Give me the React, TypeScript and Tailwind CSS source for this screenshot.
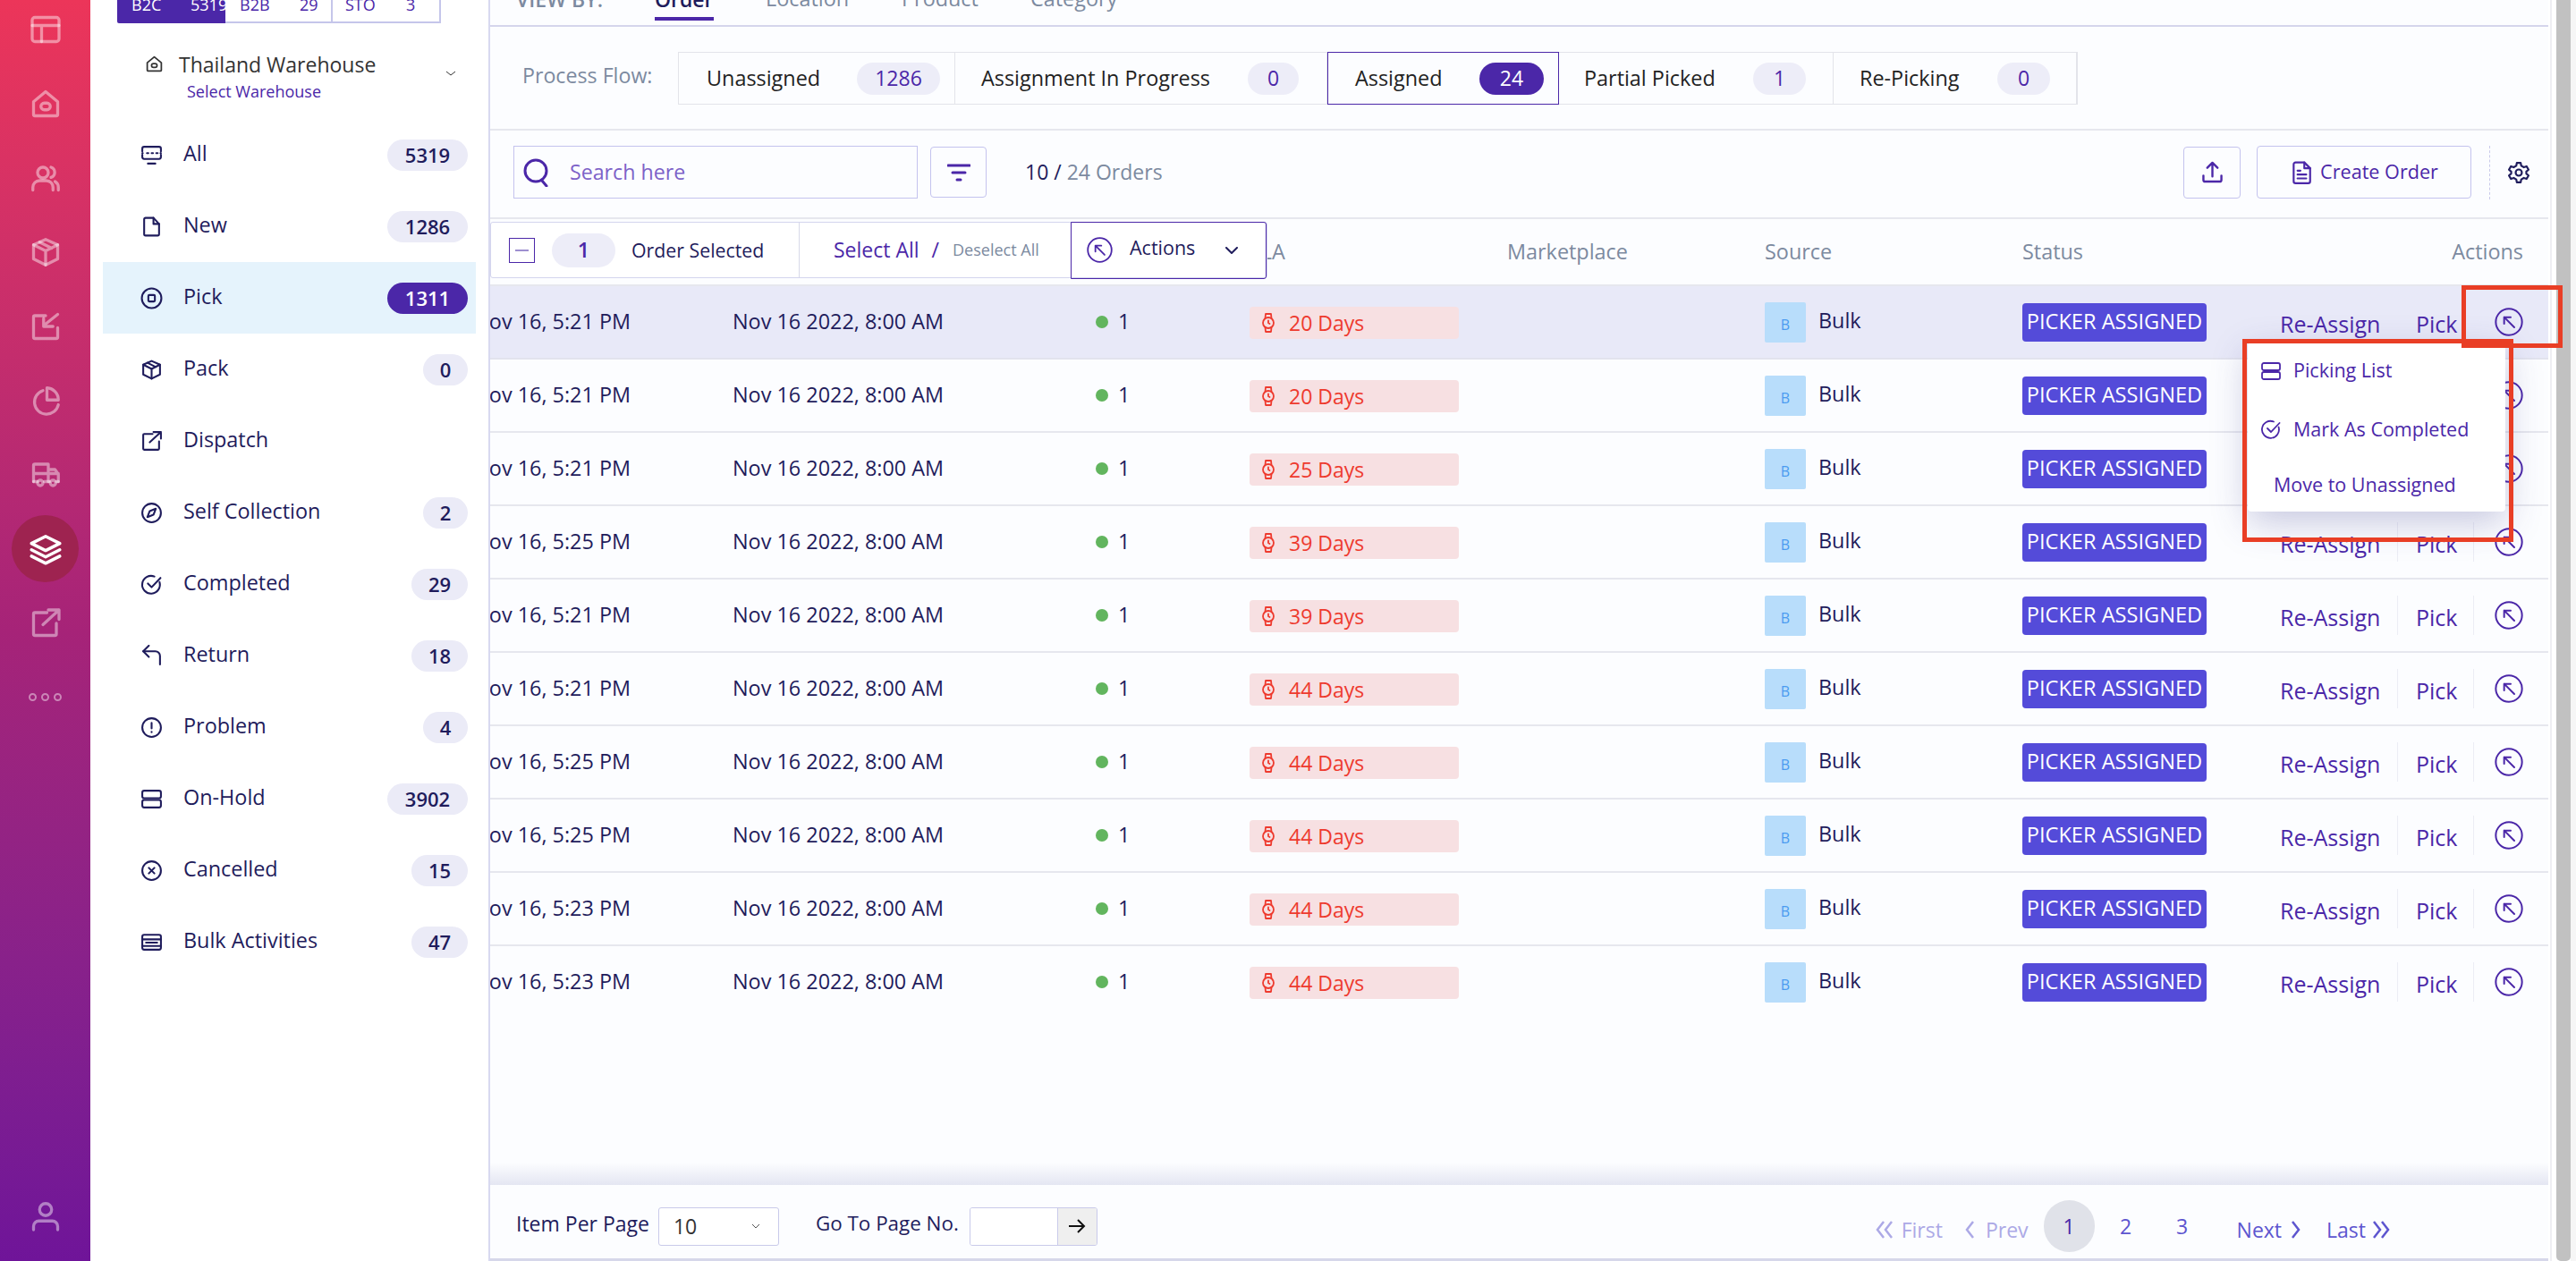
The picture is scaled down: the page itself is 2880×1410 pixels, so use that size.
import React from "react";

type IP = { className?: string; sw?: number; children?: React.ReactNode };
const I = ({ className, sw = 2, children }: IP) => (
  <svg viewBox="0 0 24 24" fill="none" stroke="currentColor" strokeWidth={sw} strokeLinecap="round" strokeLinejoin="round" className={className}>
    {children}
  </svg>
);

const P = {
  layout: <><rect x="2" y="3" width="20" height="18" rx="2" /><path d="M2 9h20M9 9v12" /></>,
  home: <><path d="M3 10.5 12 3l9 7.5V20a1 1 0 0 1-1 1H4a1 1 0 0 1-1-1z" /><rect x="8.5" y="11.5" width="7" height="5" rx="2.5" /></>,
  users: <><circle cx="10" cy="8" r="4" /><path d="M2.5 21v-2a5 5 0 0 1 5-5h5a5 5 0 0 1 5 5v2M16 4a4 4 0 0 1 0 7.6M21.5 21v-2a5 5 0 0 0-2.5-4.3" /></>,
  box: <><path d="M12 2.5 21 6.5v10.5l-9 4.5-9-4.5V6.5z" /><path d="M3 6.5l9 4.5 9-4.5M12 11v10.5M7.5 4.5l9 4.5" /></>,
  imp: <><path d="M12 4H4a1 1 0 0 0-1 1v15a1 1 0 0 0 1 1h16a1 1 0 0 0 1-1v-7" /><path d="M21 3l-10 8M10.5 6v6h7" /></>,
  pie: <><path d="M10 4.5A9 9 0 1 0 21.5 15" /><path d="M13 2.5a9 9 0 0 1 8.5 9H13z" /></>,
  truck: <><path d="M3 17V5a1 1 0 0 1 1-1h10v13M14 8h5l2.5 3.5V17M3 11h18.5" /><path d="M3 17h3M11 17h3M14 17h1M20 17h1.5" /><circle cx="8" cy="18" r="2" /><circle cx="17.5" cy="18" r="2" /></>,
  layers: <><path d="M12 3 22 8l-10 5L2 8z" /><path d="M2 12.5l10 5 10-5M2 17l10 5 10-5" /></>,
  ext: <><path d="M13 4H4a1 1 0 0 0-1 1v15a1 1 0 0 0 1 1h15a1 1 0 0 0 1-1v-8" /><path d="M22 2 10 13M14 2h8v7" /></>,
  user: <><circle cx="12" cy="7" r="4.5" /><path d="M3 22v-2.5a4 4 0 0 1 4-4h10a4 4 0 0 1 4 4V22" /></>,
  all: <><path d="M2 8V5a2 2 0 0 1 2-2h16a2 2 0 0 1 2 2v3M2 11.500V14a2 2 0 0 0 2 2h16a2 2 0 0 0 2-2v-2.500M2 9.800h.5M7 9.800h1.500M12 9.800h1.500M17 9.800h1.500M21.500 9.800h.5M8 21h8" /></>,
  file: <><path d="M5.500 2.500h8.500l6 6.500V20a1.500 1.500 0 0 1-1.500 1.500h-13A1.500 1.500 0 0 1 4 20V4a1.500 1.500 0 0 1 1.500-1.500z" /><path d="M14 2.500V9h6" /></>,
  pick: <><circle cx="12" cy="12" r="10.500" /><rect x="8.500" y="8.500" width="7" height="7" rx="1" /></>,
  compass: <><circle cx="12" cy="12" r="10" /><path d="M16.500 7.500 14 14l-6.500 2.500L10 10z" /></>,
  check: <><path d="M20.500 9.500A9.500 9.500 0 1 1 15 3.500" /><path d="M8 11l4 4 9.500-10" /></>,
  ret: <><path d="M9 4 3 10l6 6" transform="translate(0 -3)" /><path d="M3 7h13a5 5 0 0 1 5 5v9" /></>,
  alert: <><circle cx="12" cy="12" r="10" /><path d="M12 7v6M12 16.500v.5" /></>,
  hold: <><rect x="2" y="3" width="20" height="8" rx="2" /><rect x="2" y="13" width="20" height="8" rx="2" /></>,
  cancel: <><circle cx="12" cy="12" r="10" /><path d="m9 9 6 6M15 9l-6 6" /></>,
  bulk: <><rect x="2" y="4" width="20" height="16" rx="2" /><path d="M2 9h20M6 12.500h12M2 16h20" /></>,
  act: <><circle cx="12" cy="12" r="11" /><path d="M16.500 16.500 8 8M8 13.500V8h5.500" /></>,
  watch: <><circle cx="12" cy="12" r="6" /><path d="M12 9.500V12l1.500 1M8.500 7 9 2h6l.5 5M8.500 17l.5 5h6l.5-5" /></>,
  gear: <><circle cx="12" cy="12" r="3.200" /><path d="M10 2h4l.6 3 2.600 1.500 2.900-1 2 3.500-2.300 2v2l2.300 2-2 3.500-2.900-1-2.600 1.500-.6 3h-4l-.6-3-2.600-1.500-2.900 1-2-3.500 2.300-2v-2l-2.300-2 2-3.500 2.900 1L9.400 5z" /></>,
  doc: <><path d="M6 1.500h9l6 6V21a2 2 0 0 1-2 2H6a2 2 0 0 1-2-2V3.500a2 2 0 0 1 2-2z" /><path d="M15 1.500v6h6M8 10h3M8 14h9M8 18h9" /></>,
};

const rail = [P.layout, P.home, P.users, P.box, P.imp, P.pie, P.truck];
const nav: [string, React.ReactNode, string | null][] = [
  ["All", P.all, "5319"], ["New", P.file, "1286"], ["Pick", P.pick, "1311"], ["Pack", P.box, "0"],
  ["Dispatch", P.ext, null], ["Self Collection", P.compass, "2"], ["Completed", P.check, "29"], ["Return", P.ret, "18"],
  ["Problem", P.alert, "4"], ["On-Hold", P.hold, "3902"], ["Cancelled", P.cancel, "15"], ["Bulk Activities", P.bulk, "47"],
];
const flow: [string, string, string, string, boolean][] = [
  ["Unassigned", "1286", "w-[309px] pl-[31px] pr-[16px]", "w-[93px]", false],
  ["Assignment In Progress", "0", "w-[416px] pl-[29px] pr-[31px]", "w-[57px]", false],
  ["Assigned", "24", "w-[259px] pl-[30px] pr-[16px]", "w-[72px]", true],
  ["Partial Picked", "1", "w-[307px] pl-[28px] pr-[30px]", "w-[59px]", false],
  ["Re-Picking", "0", "w-[272px] pl-[29px] pr-[29px]", "w-[59px]", false],
];
const rows: [string, string][] = [
  ["5:21", "20"], ["5:21", "20"], ["5:21", "25"], ["5:25", "39"], ["5:21", "39"],
  ["5:21", "44"], ["5:25", "44"], ["5:25", "44"], ["5:23", "44"], ["5:23", "44"],
];

export default function App() {
  return (
    <div className="relative flex h-[1410px] w-[2880px] overflow-hidden bg-white font-['Open_Sans',sans-serif] text-[#1f1c5c]">
      {/* rail */}
      <div className="flex w-[101px] shrink-0 flex-col items-center bg-linear-to-b from-[#ec3559] via-[#a62378] to-[#6f1499] pb-[32px]">
        <div className="-mt-[9px] flex flex-col items-center">
          {rail.map((p, i) => (
            <div key={i} className="flex h-[83px] items-center justify-center text-white/45">
              <I className="h-[36px] w-[36px]" sw={2.2}>{p}</I>
            </div>
          ))}
          <div className="flex h-[83px] items-center justify-center">
            <div className="flex h-[75px] w-[75px] items-center justify-center rounded-full bg-[#9e2350] text-white">
              <I className="h-[38px] w-[38px]" sw={2.2}>{P.layers}</I>
            </div>
          </div>
          <div className="flex h-[83px] items-center justify-center text-white/45">
            <I className="h-[36px] w-[36px]" sw={2.2}>{P.ext}</I>
          </div>
          <div className="flex h-[83px] items-center justify-center gap-[5px]">
            <span className="h-[9px] w-[9px] rounded-full border-[2.500px] border-white/45" />
            <span className="h-[9px] w-[9px] rounded-full border-[2.500px] border-white/45" />
            <span className="h-[9px] w-[9px] rounded-full border-[2.500px] border-white/45" />
          </div>
        </div>
        <div className="mt-auto text-white/45">
          <I className="h-[36px] w-[36px]" sw={2.2}>{P.user}</I>
        </div>
      </div>

      {/* sidebar */}
      <div className="flex w-[445px] shrink-0 flex-col bg-white">
        <div className="ml-[30px] flex h-[26px] w-[362px] text-[18px]">
          <div className="flex w-[121px] overflow-hidden rounded-bl-[2px] bg-[#4b27a8] pl-[16px] leading-[20px] text-white">
            <span className="-mt-[5px] w-[66px] shrink-0">B2C</span><span className="-mt-[5px]">5319</span>
          </div>
          <div className="flex w-[120px] overflow-hidden border-r-2 border-b-2 border-[#c5c6ea] pl-[16px] leading-[20px] text-[#4b27a8]">
            <span className="-mt-[5px] w-[67px] shrink-0">B2B</span><span className="-mt-[5px]">29</span>
          </div>
          <div className="flex w-[121px] overflow-hidden border-r-2 border-b-2 border-[#c5c6ea] pl-[14px] leading-[20px] text-[#4b27a8]">
            <span className="-mt-[5px] w-[68px] shrink-0">STO</span><span className="-mt-[5px]">3</span>
          </div>
        </div>
        <div className="flex h-[107px] items-start pt-[32px] pl-[61px]">
          <I className="mt-[3px] h-[21px] w-[21px] text-[#333]" sw={2}>{P.home}</I>
          <div className="ml-[17px]">
            <div className="text-[23px] leading-[28px] text-[#333]">Thailand Warehouse</div>
            <div className="mt-[4px] ml-[9px] text-[18px] leading-[24px] text-[#4b27a8]">Select Warehouse</div>
          </div>
          <svg viewBox="0 0 12 6" fill="none" stroke="#333" strokeWidth="1" className="mt-[21px] ml-[78px] h-[6px] w-[12px]"><path d="M1 1l5 4 5-4" /></svg>
        </div>
        <div className="ml-[14px] w-[417px]">
          {nav.map(([l, p, c]) => {
            const on = l === "Pick";
            return (
              <div key={l} className={`flex h-[80px] items-center pr-[9px] pl-[42px] ${on ? "bg-[#e5f3fc]" : ""}`}>
                <I className="h-[25px] w-[25px] shrink-0 text-[#1f1c5c]">{p}</I>
                <span className="-mt-[3px] ml-[23px] text-[23.4px]">{l}</span>
                {c && (
                  <span className={`ml-auto flex h-[35px] items-center justify-center rounded-full text-[22px] font-semibold ${c.length === 4 ? "w-[90px]" : c.length === 2 ? "w-[63px]" : "w-[50px]"} ${on ? "bg-[#4b27a8] text-white" : "bg-[#ebebf7]"}`}>{c}</span>
                )}
              </div>
            );
          })}
        </div>
      </div>

      {/* main */}
      <div className="flex w-[2303px] shrink-0 flex-col border-l-2 border-[#d8d9f0] bg-[#fcfdff]">
        <div className="flex h-[30px] shrink-0 items-end border-b-2 border-[#d5d5ec] text-[23.4px] text-[#7c8aa0]">
          <span className="mb-[12px] ml-[29px] w-[155px] shrink-0 text-[23px] font-semibold whitespace-nowrap">VIEW BY:</span>
          <span className="relative mb-[12px] w-[124px] shrink-0 text-[23px] font-semibold text-[#1f1c5c]">Order
            <span className="absolute top-[37px] left-0 h-[4px] w-[66px] bg-[#4b27a8]" />
          </span>
          <span className="mb-[12px] w-[152px] shrink-0">Location</span>
          <span className="mb-[12px] w-[144px] shrink-0">Product</span>
          <span className="mb-[12px] shrink-0">Category</span>
        </div>

        <div className="flex h-[116px] shrink-0 items-start border-b-2 border-[#e6e7ee] pt-[28px] pl-[36px]">
          <span className="mt-[9px] w-[174px] shrink-0 text-[23.2px] whitespace-nowrap text-[#7c8aa0]">Process Flow:</span>
          <div className="flex h-[59px] border border-[#e3e4ea]">
            {flow.map(([l, c, cell, badge, on]) => (
              <div key={l} className={`-my-px flex items-center justify-between ${cell} ${on ? "border border-[#4b27a8]" : "border-r border-[#e3e4ea]"}`}>
                <span className="text-[23.4px] whitespace-nowrap text-[#222]">{l}</span>
                <span className={`flex h-[36px] items-center justify-center rounded-full text-[23px] ${badge} ${on ? "bg-[#4b27a8] text-white" : "bg-[#ededf8] text-[#4b27a8]"}`}>{c}</span>
              </div>
            ))}
          </div>
        </div>

        <div className="flex h-[99px] shrink-0 items-center border-b-2 border-[#e6e7ee] pb-[4px] pl-[26px]">
          <div className="flex h-[59px] w-[452px] items-center border-[1.5px] border-[#c4c3ee] pl-[10px]">
            <svg viewBox="0 0 30 32" fill="none" stroke="#4b27a8" strokeWidth="3" strokeLinecap="round" className="h-[32px] w-[30px]"><circle cx="14" cy="14" r="12" /><path d="M21 25l5 6" /></svg>
            <span className="ml-[22px] text-[23.2px] text-[#7d62c8]">Search here</span>
          </div>
          <div className="ml-[14px] flex h-[57px] w-[63px] items-center justify-center rounded-[4px] border-[1.5px] border-[#c4c3ee]">
            <svg viewBox="0 0 26 20" fill="none" stroke="#4b27a8" strokeWidth="3" strokeLinecap="round" className="h-[20px] w-[26px]"><path d="M1 2h24M6 10h14M11 18h4" /></svg>
          </div>
          <span className="ml-[43px] text-[23px]">10 / <span className="text-[#7c8aa0]">24 Orders</span></span>
          <div className="ml-auto flex h-[58px] w-[64px] items-center justify-center rounded-[4px] border-[1.5px] border-[#c4c3ee]">
            <svg viewBox="0 0 24 26" fill="none" stroke="#4b27a8" strokeWidth="2.500" strokeLinecap="round" strokeLinejoin="round" className="h-[25px] w-[23px]"><path d="M12 18V2M6 8l6-6 6 6M1.500 17v5a2 2 0 0 0 2 2h17a2 2 0 0 0 2-2v-5" /></svg>
          </div>
          <div className="ml-[18px] flex h-[59px] w-[240px] items-center justify-center gap-[8px] rounded-[4px] border-[1.5px] border-[#c4c3ee] text-[21.6px] text-[#4b27a8]">
            <I className="h-[26px] w-[26px]">{P.doc}</I>
            <span>Create Order</span>
          </div>
          <div className="ml-[20px] h-[60px] border-l border-dashed border-[#c9caea]" />
          <I className="mr-[20px] ml-[19px] h-[26px] w-[26px] text-[#1f1c5c]" sw={2}>{P.gear}</I>
        </div>

        {/* table head */}
        <div className="relative flex h-[75px] shrink-0 items-center border-b-2 border-[#e6e7ee] pr-[28px] text-[23.4px] text-[#7c8aa0]">
          <span className="ml-[849px] w-[288px] shrink-0">SLA</span>
          <span className="w-[288px] shrink-0">Marketplace</span>
          <span className="w-[288px] shrink-0">Source</span>
          <span className="shrink-0">Status</span>
          <span className="ml-auto">Actions</span>
          <div className="absolute top-[3px] left-0 flex h-[63px] w-[869px] rounded-[3px] border-[1.5px] border-[#d4d5ee] bg-white text-[#1f1c5c]">
            <div className="flex w-[345px] items-center border-r border-[#d8d9e8] pl-[20px]">
              <span className="flex h-[28px] w-[29px] items-center justify-center border border-[#4b27a8]">
                <span className="h-[2px] w-[15px] bg-[#9d8fd0]" />
              </span>
              <span className="ml-[19px] flex h-[38px] w-[71px] items-center justify-center rounded-full bg-[#ededf8] font-semibold text-[#4b27a8]">1</span>
              <span className="ml-[18px] text-[21.3px] whitespace-nowrap">Order Selected</span>
            </div>
            <div className="flex w-[303px] items-center pl-[38px] text-[#4b27a8]">
              <span className="text-[23px] whitespace-nowrap">Select All</span>
              <span className="ml-[14px] text-[23px]">/</span>
              <span className="ml-[15px] text-[18px] whitespace-nowrap text-[#7c8aa0]">Deselect All</span>
            </div>
            <div className="-my-[1.5px] flex flex-1 items-center rounded-r-[3px] border-[1.5px] border-[#4b27a8] pl-[17px]">
              <I className="h-[29px] w-[29px] text-[#4b27a8]" sw={1.500}>{P.act}</I>
              <span className="-mt-[4px] ml-[19px] text-[21.5px]">Actions</span>
              <svg viewBox="0 0 14 8" fill="none" stroke="#1f1c5c" strokeWidth="2" strokeLinecap="round" className="ml-[34px] h-[8px] w-[14px]"><path d="M1 1l6 6 6-6" /></svg>
            </div>
          </div>
        </div>

        {/* rows */}
        <div className="flex-1">
          {rows.map(([t, d], i) => (
            <div key={i} className={`flex h-[82px] items-center border-b-2 text-[23.4px] ${i === 0 ? "border-[#e2e3ee] bg-[#e8e9f8]" : i === 9 ? "border-transparent" : "border-[#e6e7ee]"}`}>
              <div className="flex w-[271px] shrink-0 justify-end overflow-hidden pr-[114px] whitespace-nowrap">Nov 16, {t} PM</div>
              <div className="w-[406px] shrink-0 whitespace-nowrap">Nov 16 2022, 8:00 AM</div>
              <div className="flex w-[172px] shrink-0 items-center">
                <span className="h-[14px] w-[14px] rounded-full bg-[#62b55e]" />
                <span className="ml-[11px]">1</span>
              </div>
              <div className="w-[576px] shrink-0">
                <div className="mt-[2px] flex h-[36px] w-[234px] items-center rounded-[4px] bg-[#f7e0e2] pl-[9px] text-[23px] text-[#ee3a2e]">
                  <I className="h-[24px] w-[24px] shrink-0" sw={1.800}>{P.watch}</I>
                  <span className="ml-[11px]">{d} Days</span>
                </div>
              </div>
              <div className="flex w-[288px] shrink-0 items-center">
                <span className="flex h-[45px] w-[46px] items-center justify-center rounded-[2px] bg-[#b8ddfb] pt-[6px] text-[16px] text-[#4a9bf0]">B</span>
                <span className="ml-[14px] -translate-y-px">Bulk</span>
              </div>
              <div className="w-[288px] shrink-0">
                <span className="flex h-[43px] w-[206px] items-center justify-center rounded-[4px] bg-[#544bd9] text-[23.6px] whitespace-nowrap text-white">PICKER ASSIGNED</span>
              </div>
              <div className="flex h-[44px] items-center text-[25px] text-[#4b27a8]">
                <span className="mt-[6px] w-[131px] shrink-0">Re-Assign</span>
                <span className={`h-[44px] border-l ${i === 0 ? "border-transparent" : "border-[#ecedf5]"}`} />
                <span className="mt-[6px] ml-[20px] w-[64px] shrink-0">Pick</span>
                <span className={`h-[44px] border-l ${i === 0 ? "border-transparent" : "border-[#ecedf5]"}`} />
                <I className="ml-[23px] h-[32px] w-[32px] shrink-0" sw={1.500}>{P.act}</I>
              </div>
            </div>
          ))}
        </div>

        {/* footer */}
        <div className="h-[25px] shrink-0 bg-linear-to-b from-[#fcfdff] to-[#e4e6f2]" />
        <div className="flex h-[85px] shrink-0 items-center border-b-[3px] border-[#d6d7ea] pt-[10px] pr-[175px] pl-[29px] text-[23px]">
          <span className="-mt-[6px]">Item Per Page</span>
          <div className="ml-[10px] flex h-[43px] w-[135px] items-center justify-between rounded-[3px] border-[1.5px] border-[#c9caea] bg-white pr-[20px] pl-[16px] text-[#333]">
            <span>10</span>
            <svg viewBox="0 0 10 6" fill="none" stroke="#555" strokeWidth="1" className="h-[6px] w-[10px]"><path d="M1 1l4 4 4-4" /></svg>
          </div>
          <span className="-mt-[6px] ml-[41px] text-[22.4px]">Go To Page No.</span>
          <div className="ml-[12px] flex h-[43px] w-[143px] overflow-hidden rounded-[3px] border-[1.5px] border-[#c9caea]">
            <span className="w-[98px] border-r-[1.5px] border-[#c9caea] bg-white" />
            <span className="flex flex-1 items-center justify-center bg-[#efefef] text-[#111]">
              <svg viewBox="0 0 20 20" fill="none" stroke="currentColor" strokeWidth="2" className="h-[20px] w-[20px]"><path d="M1 10h17M11 3l7 7-7 7" /></svg>
            </span>
          </div>
          <div className="ml-auto flex items-center">
            <div className="mt-[8px] flex items-center text-[#aca9e6]">
              <svg viewBox="0 0 24 20" fill="none" stroke="currentColor" strokeWidth="2.500" className="h-[20px] w-[24px]"><path d="M10 1 3 10l7 9M19 1l-7 9 7 9" /></svg>
              <span className="ml-[6px]">First</span>
              <svg viewBox="0 0 12 20" fill="none" stroke="currentColor" strokeWidth="2.500" className="ml-[24px] h-[20px] w-[12px]"><path d="M10 1 3 10l7 9" /></svg>
              <span className="ml-[12px]">Prev</span>
            </div>
            <span className="ml-[17px] flex h-[58px] w-[57px] items-center justify-center rounded-full bg-[#e0e2e9] text-[#4b27a8]">1</span>
            <span className="w-[70px] text-center text-[#5d55cf]">2</span>
            <span className="w-[56px] text-center text-[#5d55cf]">3</span>
            <div className="mt-[8px] ml-[33px] flex items-center text-[#5d55cf]">
              <span>Next</span>
              <svg viewBox="0 0 12 20" fill="none" stroke="currentColor" strokeWidth="2.500" className="ml-[10px] h-[20px] w-[12px]"><path d="M2 1l7 9-7 9" /></svg>
              <span className="ml-[28px]">Last</span>
              <svg viewBox="0 0 24 20" fill="none" stroke="currentColor" strokeWidth="2.500" className="ml-[5px] h-[20px] w-[24px]"><path d="M4 1l7 9-7 9M13 1l7 9-7 9" /></svg>
            </div>
          </div>
        </div>
      </div>

      {/* scrollbar gutter */}
      <div className="flex flex-1 bg-white">
        <div className="ml-[2px] w-[2px] bg-[#eeeef3]" />
        <div className="ml-[5px] w-[16px] rounded-b-[5px] bg-[#c1c1c1]" />
        <div className="flex-1 bg-[#f6f6f6]" />
      </div>

      {/* popover */}
      <div className="absolute top-[383px] left-[2513px] h-[189px] w-[288px] rounded-[4px] bg-white text-[21.5px] text-[#4b27a8] shadow-[0_12px_40px_rgba(60,60,140,0.28)]">
        <div className="flex h-[62px] items-center pt-[1px] pl-[14px]">
          <I className="h-[24px] w-[24px]" sw={1.800}>{P.hold}</I>
          <span className="ml-[13px]">Picking List</span>
        </div>
        <div className="flex h-[65px] items-center pt-[5px] pl-[14px]">
          <I className="h-[24px] w-[24px]" sw={1.800}>{P.check}</I>
          <span className="ml-[13px]">Mark As Completed</span>
        </div>
        <div className="pt-[16px] pl-[29px]">Move to Unassigned</div>
      </div>
      {/* annotation boxes */}
      <div className="pointer-events-none absolute top-[319px] left-[2752px] h-[70px] w-[113px] border-[5px] border-[#e93e25]" />
      <div className="pointer-events-none absolute top-[379px] left-[2507px] h-[227px] w-[303px] border-[5px] border-[#e93e25]" />
    </div>
  );
}
